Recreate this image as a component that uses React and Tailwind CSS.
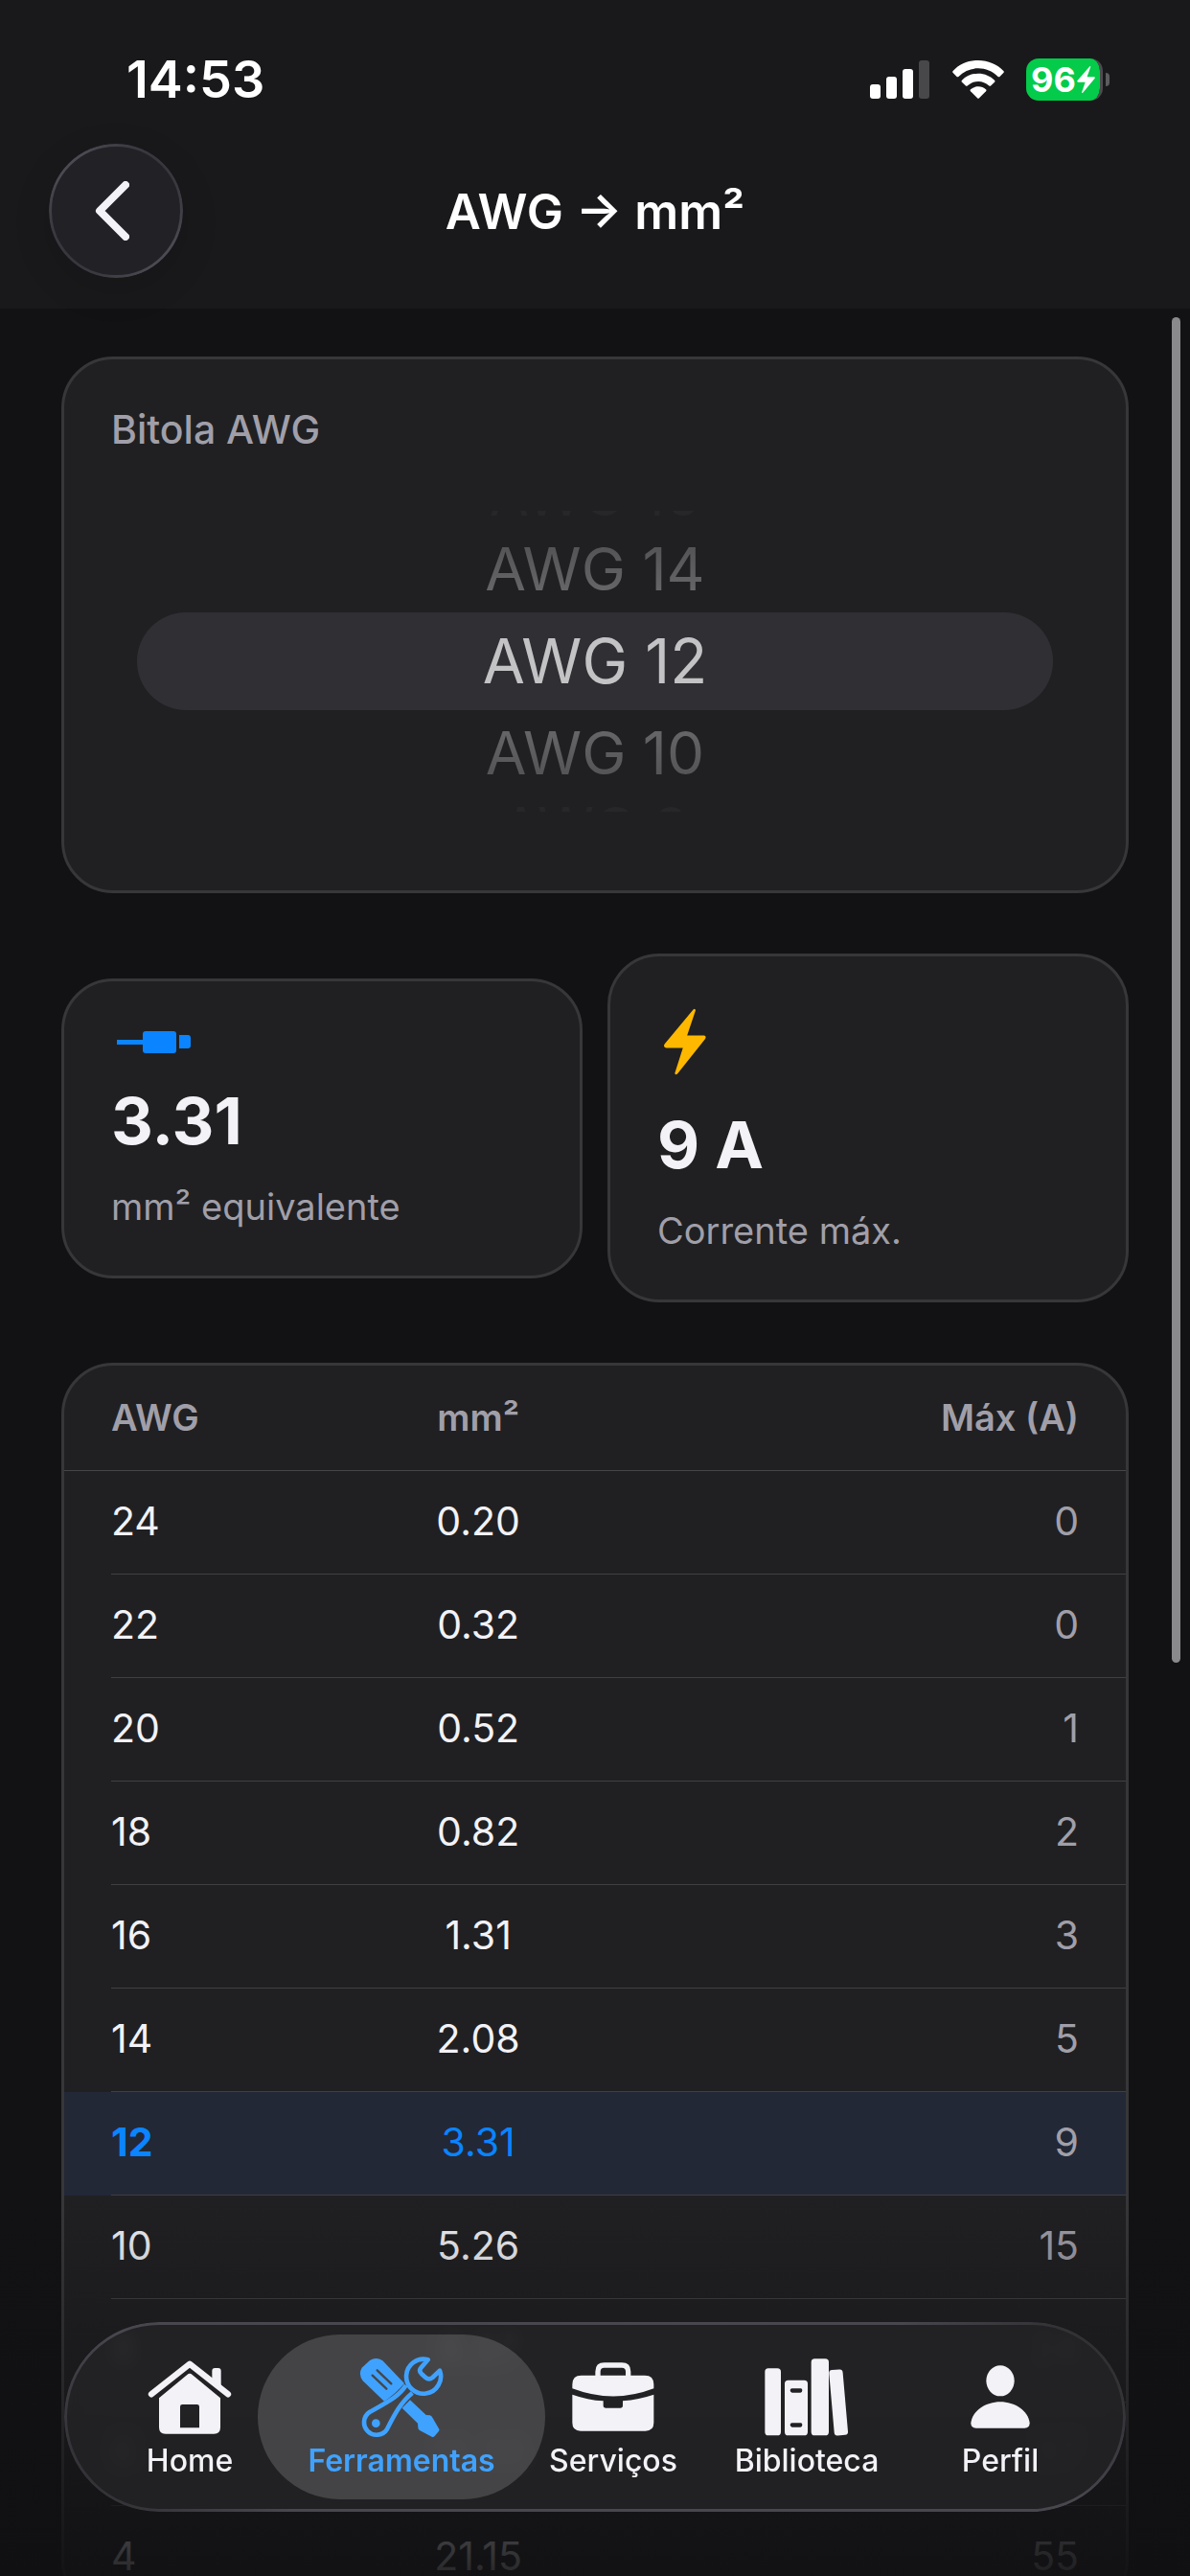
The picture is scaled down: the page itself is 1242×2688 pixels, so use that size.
import { useState } from 'react';

const GAUGES = [
  { awg: 24, mm: '0.20', max: 0 },
  { awg: 22, mm: '0.32', max: 0 },
  { awg: 20, mm: '0.52', max: 1 },
  { awg: 18, mm: '0.82', max: 2 },
  { awg: 16, mm: '1.31', max: 3 },
  { awg: 14, mm: '2.08', max: 5 },
  { awg: 12, mm: '3.31', max: 9 },
  { awg: 10, mm: '5.26', max: 15 },
  { awg: 8, mm: '8.37', max: 24 },
  { awg: 6, mm: '13.30', max: 37 },
  { awg: 4, mm: '21.15', max: 55 },
];

const BOLT = 'M70 3 Q75 -3 76 5 L56 84 H96 Q103 86 98 96 L34 203 Q28 211 27 202 L46 123 H6 Q-2 120 3 110 Z';

/* ── Status bar icons ── */
function SignalIcon() {
  return (
    <svg width="63" height="40" viewBox="0 0 63 40" fill="#fff">
      <rect x="0" y="25" width="11" height="15" rx="3" />
      <rect x="17" y="17" width="11" height="23" rx="3" />
      <rect x="34" y="9" width="11" height="31" rx="3" />
      <rect x="51" y="0" width="11" height="40" rx="3" fill="#48484a" />
    </svg>
  );
}

function WifiIcon() {
  return (
    <svg width="54" height="40" viewBox="0 0 162 120" fill="#fff">
      <path d="M81 0 C112 0 140 12 160 33 Q163 36 160 39 L149 50 Q146 53 142 50 C125 34 104 25 81 25 S37 34 20 50 Q16 53 13 50 L2 39 Q-1 36 2 33 C22 12 50 0 81 0Z" />
      <path d="M81 41 C101 41 119 49 132 62 Q135 65 132 68 L121 79 Q118 82 114 79 C105 71 94 66 81 66 S57 71 48 79 Q44 82 41 79 L30 68 Q27 65 30 62 C43 49 61 41 81 41Z" />
      <path d="M81 82 C91 82 98 86 105 91 Q108 94 105 97 L84 118 Q81 121 78 118 L57 97 Q54 94 57 91 C64 86 71 82 81 82Z" />
    </svg>
  );
}

function Battery() {
  return (
    <div className="flex items-center gap-[3px]">
      <div className="flex h-11 w-20 items-center justify-center gap-px rounded-[13px] border-r-3 border-[#4c4c4e] bg-[#04cb49] bg-clip-padding text-[36px] leading-none font-bold text-white">
        <span>96</span>
        <svg width="19" height="28" viewBox="0 0 101 207" preserveAspectRatio="none" fill="#fff">
          <path d={BOLT} />
        </svg>
      </div>
      <div className="h-[14px] w-1 rounded-r-full bg-[#5c5c5e]" />
    </div>
  );
}

/* ── Card icons ── */
function CableIcon() {
  return (
    <svg width="78" height="33" viewBox="0 0 78 33" fill="#0a84ff" className="ml-[6px]">
      <rect x="0" y="14" width="28" height="5" />
      <rect x="27" y="5" width="35" height="23" rx="3" />
      <path d="M65 9 h9 q3 0 3 3 v8 q0 3 -3 3 h-9z" />
    </svg>
  );
}

function BoltIcon() {
  return (
    <svg width="45" height="84" viewBox="-1 -2 102 211" preserveAspectRatio="none" fill="#ffb800" className="ml-[6px] py-[7px]">
      <path d={BOLT} />
    </svg>
  );
}

/* ── Tab icons ── */
function HomeIcon() {
  return (
    <svg width="88" height="78" viewBox="276 153 264 234" fill="currentColor">
      <path d="M288 262 L408 167 L528 262" fill="none" stroke="currentColor" strokeWidth="19" strokeLinecap="round" strokeLinejoin="round" />
      <path d="M478 215 V189 q0 -9 9 -9 H497 q9 0 9 9 V240z" />
      <path fillRule="evenodd" d="M312 274 L400 201 Q408 194 416 201 L504 274 V366 q0 20 -20 20 H332 q-20 0 -20 -20z M378 367 H438 V301 q0 -7 -7 -7 H385 q-7 0 -7 7z" />
    </svg>
  );
}

function ToolsIcon() {
  return (
    <svg width="88" height="87" viewBox="105 143 264 261" fill="currentColor">
      <path d="M113 181 L138 158 Q158 145 178 159 L246 230 Q218 264 183 286 L116 222 Q101 202 113 181z" />
      <path d="M146 205 L190 247 M161 189 L205 231" fill="none" stroke="#464649" strokeWidth="7" strokeLinecap="round" />
      <path d="M264 282 L314 329 L326 330 Q332 332 335 339 L355 373 Q357 377 353 381 L341 395 Q337 399 332 397 L294 377 Q289 374 289 368 L288 355 L239 307 Z" />
      <g fill="none" stroke="currentColor" strokeWidth="14" strokeLinejoin="round">
        <path d="M320 156 A54 54 0 1 0 357 190 L334 212 Q323 221 312 211 L299 199 Q290 190 299 180 Z" />
        <path d="M251 236 C230 270 196 287 137 320 A39 39 0 1 0 192 373 C214 330 234 290 271 260" />
      </g>
      <circle cx="157" cy="355" r="13" />
    </svg>
  );
}

function BriefcaseIcon() {
  return (
    <svg width="86" height="72" viewBox="776 161 258 216" fill="currentColor">
      <path d="M857 208 V190 q0 -20 20 -20 H932 q20 0 20 20 V208" fill="none" stroke="currentColor" strokeWidth="16" />
      <path d="M777 243 V230 q0 -28 28 -28 H1004 q28 0 28 28 V243 Q905 292 777 243z" />
      <path d="M777 262 Q825 279 874 282 V296 q0 8 8 8 H927 q8 0 8 -8 V282 Q985 278 1032 262 V350 q0 26 -26 26 H803 q-26 0 -26 -26z" />
    </svg>
  );
}

function BooksIcon() {
  return (
    <svg width="88" height="81" viewBox="239 146 264 243" fill="currentColor">
      <rect x="240" y="177" width="50" height="210" rx="11" />
      <path fillRule="evenodd" d="M313 214 H363 q11 0 11 11 V376 q0 11 -11 11 H313 q-11 0 -11 -11 V225 q0 -11 11 -11z M325 240 q-6 0 -6 6 t6 7 H351 q6 0 6 -7 t-6 -6z M325 348 q-6 0 -6 6 t6 7 H351 q6 0 6 -7 t-6 -6z" />
      <rect x="385" y="147" width="55" height="240" rx="11" />
      <rect x="449" y="181" width="43" height="206" rx="10" transform="rotate(-5 470 284)" />
    </svg>
  );
}

function PersonIcon() {
  return (
    <svg width="62" height="66" viewBox="877 172 186 198" fill="currentColor">
      <ellipse cx="970" cy="221" rx="44" ry="48" />
      <path d="M878 353 C882 315 925 287 970 287 S1058 315 1062 353 q0 16 -16 16 H894 q-16 0 -16 -16z" />
    </svg>
  );
}

const TABS = [
  { label: 'Home', icon: HomeIcon },
  { label: 'Ferramentas', icon: ToolsIcon, active: true },
  { label: 'Serviços', icon: BriefcaseIcon },
  { label: 'Biblioteca', icon: BooksIcon },
  { label: 'Perfil', icon: PersonIcon },
];

function WheelPicker({ index, onChange }) {
  const at = (offset) => GAUGES[index + offset];
  const row = (offset, className) =>
    at(offset) ? (
      <button type="button" role="option" aria-selected={offset === 0} onClick={() => onChange(index + offset)} className={className}>
        AWG {at(offset).awg}
      </button>
    ) : (
      <div className={className} />
    );

  return (
    <div role="listbox" aria-labelledby="bitola" className="mx-[27px] mt-[59px] flex flex-col text-center">
      {row(-2, 'flex h-4 items-end justify-center overflow-hidden text-[60px] leading-[66px] text-[#272729]')}
      {row(-1, 'h-[90px] bg-gradient-to-b from-[#4c4c4e] to-[#6e6e70] bg-clip-text text-[62px] leading-[90px] text-transparent')}
      {row(0, 'h-[102px] rounded-full bg-[#302f34] text-[64px] leading-[102px] text-[#c3c3c5]')}
      {row(1, 'h-[90px] bg-gradient-to-b from-[#6e6e70] to-[#4c4c4e] bg-clip-text text-[62px] leading-[90px] text-transparent')}
      {row(2, 'flex h-4 items-start justify-center overflow-hidden text-[60px] leading-[66px] text-[#272729]')}
    </div>
  );
}

function ResultCard({ icon: Icon, value, label }) {
  return (
    <div className="flex flex-col gap-[21px] rounded-[54px] border-3 border-[#373739] bg-[#202022] px-[49px] py-[47px]">
      <Icon />
      <p className="text-[68px] leading-[88px] font-bold text-[#f2f2f7]">{value}</p>
      <p className="text-[38px] leading-[50px] text-[#a09fa9]">{label}</p>
    </div>
  );
}

function GaugeTable({ selected }) {
  const cell = 'flex h-[108px] items-center border-b border-[#404042]';
  return (
    <div className="overflow-hidden rounded-[54px] border-3 border-[#373739] bg-[#202022]">
      <table className="w-full table-fixed text-[41px]">
        <colgroup>
          <col className="w-[26%]" />
          <col className="w-[26%]" />
          <col />
        </colgroup>
        <thead className="text-[38px] text-[#a09fa9]">
          <tr className="h-[109px] border-b border-[#464648]">
            <th className="pl-[49px] text-left font-semibold">AWG</th>
            <th className="text-center font-semibold">mm²</th>
            <th className="pr-[49px] text-right font-semibold">Máx (A)</th>
          </tr>
        </thead>
        <tbody className="text-[#f2f2f7]">
          {GAUGES.map((g) => {
            const on = g.awg === selected;
            return (
              <tr key={g.awg} className={on ? 'bg-[#222836]' : ''}>
                <td className="p-0 pl-[49px]">
                  <div className={`${cell} ${on ? 'font-bold text-[#0a84ff]' : ''}`}>{g.awg}</div>
                </td>
                <td className="p-0">
                  <div className={`${cell} justify-center ${on ? 'text-[#0a84ff]' : ''}`}>{g.mm}</div>
                </td>
                <td className="p-0">
                  <div className={`${cell} justify-end pr-[49px] text-[#a09fa9]`}>{g.max}</div>
                </td>
              </tr>
            );
          })}
        </tbody>
      </table>
    </div>
  );
}

export default function App() {
  const [index, setIndex] = useState(6);
  const gauge = GAUGES[index];

  return (
    <div className="relative flex h-screen flex-col overflow-hidden bg-[#121214] font-['Inter',sans-serif]">
      <header className="shrink-0 bg-[#19191b] pb-8">
        {/* Status bar */}
        <div className="flex h-[150px] items-center justify-between pt-4 pr-[84px] pl-[132px]">
          <time className="text-[54px] leading-none font-semibold text-white">14:53</time>
          <div className="flex items-center gap-[23px]">
            <SignalIcon />
            <WifiIcon />
            <Battery />
          </div>
        </div>

        {/* Title */}
        <div className="grid grid-cols-[1fr_auto_1fr] items-center px-[51px]">
          <button type="button" aria-label="Voltar" className="relative flex size-[140px] items-center justify-center rounded-full bg-[#222126] shadow-[0_12px_40px_rgba(0,0,0,0.12)]">
            <span className="absolute inset-0 rounded-full border-3 border-[#4b4a52] [mask-image:linear-gradient(45deg,rgb(0_0_0/0.25),black_40%,black_60%,rgb(0_0_0/0.25))]" />
            <svg width="36" height="62" viewBox="0 0 36 62" fill="none" stroke="#f2f2f7" strokeWidth="8" strokeLinecap="round" strokeLinejoin="round" className="mr-2">
              <path d="M32 4 L5 31 L32 58" />
            </svg>
          </button>
          <h1 className="text-[51px] leading-none font-semibold text-white">AWG → mm²</h1>
        </div>
      </header>

      <main className="flex flex-col gap-[63px] px-16 pt-[50px]">
        <section className="rounded-[54px] border-3 border-[#373739] bg-[#202022] px-[49px] pt-[47px] pb-[82px]">
          <h2 id="bitola" className="text-[41px] leading-[52px] font-medium text-[#a09fa9]">Bitola AWG</h2>
          <WheelPicker index={index} onChange={setIndex} />
        </section>

        <section className="grid grid-cols-2 items-center gap-[26px]">
          <ResultCard icon={CableIcon} value={gauge.mm} label="mm² equivalente" />
          <ResultCard icon={BoltIcon} value={`${gauge.max} A`} label="Corrente máx." />
        </section>

        <GaugeTable selected={gauge.awg} />
      </main>

      {/* Scroll indicator */}
      <div className="absolute top-[331px] right-[10px] h-[1404px] w-[9px] rounded-full bg-[#8a8a8c]" />

      {/* Bottom fade */}
      <div className="pointer-events-none absolute inset-x-0 bottom-0 h-[400px] bg-gradient-to-b from-transparent via-[#101012]/40 to-[#101012]/90" />

      {/* Tab bar */}
      <nav className="absolute inset-x-[67px] bottom-[67px] flex h-[198px] items-center rounded-full bg-[#232325]/92 px-[30px] backdrop-blur-sm">
        <span className="pointer-events-none absolute inset-0 rounded-full border-3 border-[#48474e] [mask-image:linear-gradient(45deg,rgb(0_0_0/0.3),black_18%,black_82%,rgb(0_0_0/0.2))]" />
        {TABS.map(({ label, icon: Icon, active }) => (
          <a
            key={label}
            href="#"
            aria-current={active ? 'page' : undefined}
            className={`flex h-[172px] flex-col items-center rounded-full pt-5 ${
              active ? '-mx-[30px] w-[300px] bg-white/16 text-[#40a2ff]' : 'flex-1 text-[#f2f2f7]'
            }`}
          >
            <span className="flex h-[90px] items-center">
              <Icon />
            </span>
            <span className={`text-[32px] leading-[44px] ${active ? 'font-semibold' : 'font-medium'}`}>{label}</span>
          </a>
        ))}
      </nav>
    </div>
  );
}
